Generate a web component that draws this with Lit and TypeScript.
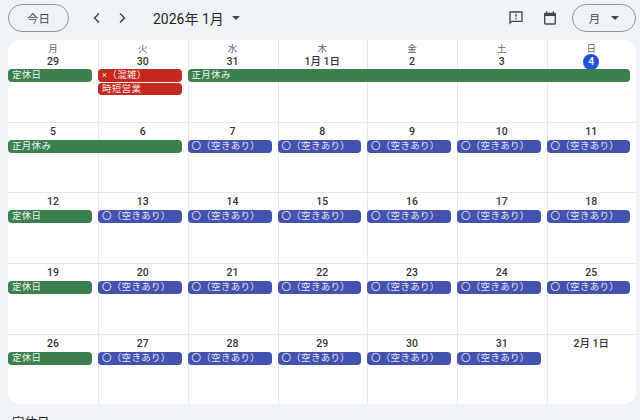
import { LitElement, html, css, svg } from "lit";
import { customElement } from "lit/decorators.js";

type Ev = { label: string; kind: "closed" | "open" | "busy"; col: number; span?: number; row?: number };
type Week = { days: string[]; heads?: string[]; events: Ev[]; today?: number };

const OPEN = "〇（空きあり）";
const openFrom = (start: number, end = 7): Ev[] => {
  const out: Ev[] = [];
  for (let c = start; c <= end; c++) out.push({ label: OPEN, kind: "open", col: c });
  return out;
};

const weeks: Week[] = [
  {
    heads: ["月", "火", "水", "木", "金", "土", "日"],
    days: ["29", "30", "31", "1月 1日", "2", "3", "4"],
    today: 6,
    events: [
      { label: "定休日", kind: "closed", col: 1 },
      { label: "×（混雑）", kind: "busy", col: 2 },
      { label: "時短営業", kind: "busy", col: 2, row: 2 },
      { label: "正月休み", kind: "closed", col: 3, span: 5 },
    ],
  },
  {
    days: ["5", "6", "7", "8", "9", "10", "11"],
    events: [{ label: "正月休み", kind: "closed", col: 1, span: 2 }, ...openFrom(3)],
  },
  {
    days: ["12", "13", "14", "15", "16", "17", "18"],
    events: [{ label: "定休日", kind: "closed", col: 1 }, ...openFrom(2)],
  },
  {
    days: ["19", "20", "21", "22", "23", "24", "25"],
    events: [{ label: "定休日", kind: "closed", col: 1 }, ...openFrom(2)],
  },
  {
    days: ["26", "27", "28", "29", "30", "31", "2月 1日"],
    events: [{ label: "定休日", kind: "closed", col: 1 }, ...openFrom(2, 6)],
  },
];

const chevronLeft = svg`<path d="M10 3.5 5.5 8l4.5 4.5" fill="none" stroke="currentColor" stroke-width="1.5"/>`;
const chevronRight = svg`<path d="M6 3.5 10.5 8 6 12.5" fill="none" stroke="currentColor" stroke-width="1.5"/>`;

@customElement("app-root")
export class AppRoot extends LitElement {
  static styles = css`
    :host {
      display: block;
      height: 420px;
      overflow: hidden;
      background: #f0f4f9;
      color: #1f1f1f;
      font-family: Roboto, "Noto Sans CJK JP", sans-serif;
    }
    .toolbar {
      height: 40px;
      display: flex;
      align-items: center;
      padding: 0 4px 4px 8px;
      box-sizing: border-box;
    }
    .pill {
      height: 28px;
      border: 1px solid #8e9196;
      border-radius: 14px;
      box-sizing: border-box;
      display: flex;
      align-items: center;
      justify-content: center;
      font-size: 11.5px;
      color: #444746;
    }
    .today {
      width: 61px;
    }
    .nav {
      display: flex;
      gap: 9px;
      margin-left: 20px;
      color: #444746;
    }
    .nav svg {
      width: 16px;
      height: 16px;
      display: block;
    }
    .title {
      margin-left: 23px;
      font-size: 14px;
      color: #1f1f1f;
    }
    .caret {
      width: 0;
      height: 0;
      border: 4px solid transparent;
      border-top: 4px solid #444746;
      border-bottom: 0;
    }
    .title-caret {
      margin-left: 8px;
    }
    .spacer {
      flex: 1;
    }
    .icon {
      width: 16px;
      height: 16px;
      display: block;
      color: #444746;
    }
    .icon.cal {
      margin-left: 18px;
    }
    .view {
      width: 64px;
      gap: 11px;
      margin-left: 14px;
    }
    .board {
      margin-left: 8px;
      margin-right: 4px;
      height: 364px;
      background: #fff;
      border-radius: 12px;
      overflow: hidden;
      display: grid;
      grid-template-rows: 83px 70px 71px 71px 69px;
    }
    .week {
      display: grid;
      grid-template-columns: 90px 89.5px 90px 89.5px 90px 89.5px 1fr;
      grid-template-rows: 17px 13.5px 13.5px 1fr;
      position: relative;
      border-bottom: 1px solid #e6e9ef;
      box-sizing: border-box;
      min-height: 0;
    }
    .week.first {
      grid-template-rows: 29px 13.5px 13.5px 1fr;
    }
    .week:last-child {
      border-bottom: 0;
    }
    .cell {
      grid-row: 1 / 5;
      border-left: 1px solid #e6e9ef;
    }
    .cell:first-child {
      border-left: 0;
    }
    .head {
      grid-row: 1;
      text-align: center;
      padding-top: 2px;
      box-sizing: border-box;
    }
    .first .head {
      padding-top: 3px;
    }
    .dow {
      display: block;
      font-size: 9.5px;
      line-height: 12px;
      color: #5f6368;
    }
    .num {
      display: block;
      font-size: 10.5px;
      line-height: 13px;
      font-weight: 500;
      color: #333;
    }
    .num.on {
      width: 16px;
      height: 16px;
      line-height: 16px;
      margin: -1px auto 0;
      border-radius: 50%;
      background: #1f55d4;
      color: #fff;
    }
    .ev {
      height: 12.5px;
      margin-right: 6px;
      border-radius: 4px;
      box-sizing: border-box;
      padding: 0 0 0 4px;
      font-size: 9.5px;
      line-height: 12.5px;
      letter-spacing: 0.3px;
      white-space: nowrap;
      overflow: hidden;
      color: #f1f5f1;
    }
    .closed {
      background: #3a7f4c;
    }
    .open {
      background: #4352ae;
      color: #e3e6f7;
    }
    .busy {
      background: #c5281f;
      color: #fbe4e1;
    }
    .legend {
      padding: 8px 0 0 12px;
      font-size: 12.5px;
      color: #1f1f1f;
    }
  `;

  private renderWeek(w: Week) {
    return html`
      <div class="week ${w.heads ? "first" : ""}">
        ${w.days.map((_, i) => html`<div class="cell" style="grid-column:${i + 1}"></div>`)}
        ${w.days.map(
          (d, i) => html`
            <div class="head" style="grid-column:${i + 1}">
              ${w.heads ? html`<span class="dow">${w.heads[i]}</span>` : null}
              <span class="num ${w.today === i ? "on" : ""}">${d}</span>
            </div>
          `,
        )}
        ${w.events.map(
          (e) => html`
            <div
              class="ev ${e.kind}"
              style="grid-column:${e.col} / span ${e.span ?? 1};grid-row:${(e.row ?? 1) + 1}"
            >
              ${e.label}
            </div>
          `,
        )}
      </div>
    `;
  }

  render() {
    return html`
      <div class="toolbar">
        <div class="pill today">今日</div>
        <div class="nav">
          <svg viewBox="0 0 16 16">${chevronLeft}</svg>
          <svg viewBox="0 0 16 16">${chevronRight}</svg>
        </div>
        <div class="title">2026年 1月</div>
        <div class="caret title-caret"></div>
        <div class="spacer"></div>
        <svg class="icon" viewBox="0 0 24 24" fill="currentColor">
          <path
            d="M22 2H2v20l4-4h16V2zm-2 14H5.2L4 17.2V4h16v12zM11 12h2v2h-2zm0-6h2v4h-2z"
          />
        </svg>
        <svg class="icon cal" viewBox="0 0 24 24" fill="currentColor">
          <path
            d="M19 4h-1V2h-2v2H8V2H6v2H5a2 2 0 0 0-2 2v14a2 2 0 0 0 2 2h14a2 2 0 0 0 2-2V6a2 2 0 0 0-2-2zm0 16H5V9h14v11z"
          />
        </svg>
        <div class="pill view">月<span class="caret"></span></div>
      </div>
      <div class="board">${weeks.map((w) => this.renderWeek(w))}</div>
      <div class="legend">定休日</div>
    `;
  }
}
